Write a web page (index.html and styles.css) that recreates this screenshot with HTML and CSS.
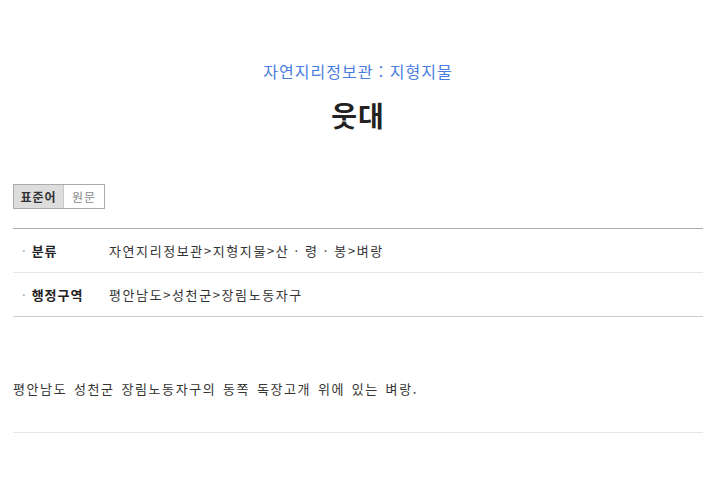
FILE: index.html
```html
<!DOCTYPE html>
<html lang="ko">
<head>
    <meta charset="UTF-8">
    <meta name="viewport" content="width=device-width, initial-scale=1.0">
    <title>웃대</title>
    <link rel="stylesheet" href="styles.css">
</head>
<body>
    <div class="container">
        <div class="heading">
            <p class="category">자연지리정보관 : 지형지물</p>
            <h1 class="title">웃대</h1>
        </div>

        <div class="tabs">
            <button class="tab active">표준어</button>
            <button class="tab">원문</button>
        </div>

        <table class="info">
            <tr>
                <th>분류</th>
                <td>자연지리정보관&gt;지형지물&gt;산 · 령 · 봉&gt;벼랑</td>
            </tr>
            <tr>
                <th>행정구역</th>
                <td>평안남도&gt;성천군&gt;장림노동자구</td>
            </tr>
        </table>

        <div class="desc">
            <p>평안남도 성천군 장림노동자구의 동쪽 독장고개 위에 있는 벼랑.</p>
        </div>
    </div>
</body>
</html>
```

FILE: styles.css
```css
body {
    font-family: "Noto Sans CJK KR", "Noto Sans", sans-serif;
    font-size: 13px;
    letter-spacing: 1.6px;
    color: #333;
    margin: 0;
    background-color: white;
}
.container {
    margin: 0 15px 0 13px;
}
.heading {
    text-align: center;
    padding-top: 59px;
}
.category {
    margin: 0;
    font-size: 16px;
    line-height: 24px;
    letter-spacing: 1px;
    color: #4a7de0;
}
.title {
    margin: 15px 0 0;
    font-size: 28px;
    line-height: 34px;
    letter-spacing: 1px;
    color: #222;
}
.tabs {
    display: flex;
    margin-top: 52px;
    width: fit-content;
    border: 1px solid #aaa;
}
.tab {
    margin: 0;
    padding: 0;
    width: 40px;
    height: 23px;
    font-family: inherit;
    font-size: 12px;
    letter-spacing: 1px;
    border: none;
    background-color: white;
    color: #888;
}
.tab.active {
    width: 50px;
    background-color: #ddd;
    color: #333;
    font-weight: bold;
    border-right: 1px solid #c8c8c8;
}
.info {
    width: 100%;
    border-collapse: collapse;
    margin-top: 19px;
    border-top: 1px solid #aaa;
    border-bottom: 1px solid #ccc;
}
.info th, .info td {
    height: 43px;
    padding: 0;
    text-align: left;
}
.info tr + tr th, .info tr + tr td {
    border-top: 1px solid #e6e6e6;
}
.info th {
    width: 87px;
    padding-left: 9px;
    letter-spacing: 1px;
    color: #222;
}
.info th::before {
    content: "·";
    color: #999;
    margin-right: 5px;
    font-weight: normal;
}
.desc {
    padding: 62px 0 33px;
    border-bottom: 1px solid #e6e6e6;
}
.desc p {
    margin: 0;
    line-height: 20px;
    word-spacing: 1.5px;
}
```
